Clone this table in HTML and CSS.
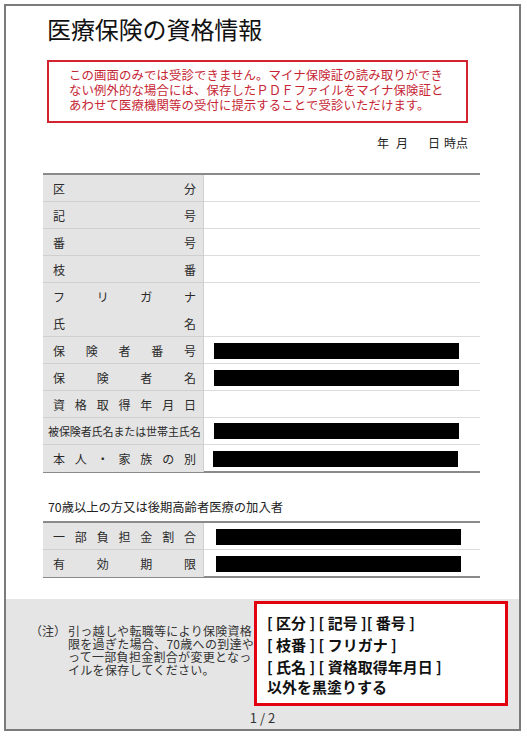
FILE: index.html
```html
<!DOCTYPE html>
<html lang="ja">
<head>
<meta charset="utf-8">
<title>医療保険の資格情報</title>
<link rel="stylesheet" href="styles.css">
</head>
<body>
<div class="page">
  <h1 class="title">医療保険の資格情報</h1>
  <div class="notice">
    この画面のみでは受診できません。マイナ保険証の読み取りができ<br>
    ない例外的な場合には、保存したＰＤＦファイルをマイナ保険証と<br>
    あわせて医療機関等の受付に提示することで受診いただけます。
  </div>
  <div class="date"><span>年</span><span class="d-m">月</span><span class="d-d">日</span><span class="d-t">時点</span></div>

  <div class="table">
    <div class="row"><div class="label"><div class="dist"><span>区</span><span>分</span></div></div><div class="value"></div></div>
    <div class="row"><div class="label"><div class="dist"><span>記</span><span>号</span></div></div><div class="value"></div></div>
    <div class="row"><div class="label"><div class="dist"><span>番</span><span>号</span></div></div><div class="value"></div></div>
    <div class="row"><div class="label"><div class="dist"><span>枝</span><span>番</span></div></div><div class="value"></div></div>
    <div class="row row-double"><div class="label label-double"><div class="dist"><span>フ</span><span>リ</span><span>ガ</span><span>ナ</span></div><div class="dist"><span>氏</span><span>名</span></div></div><div class="value"></div></div>
    <div class="row"><div class="label"><div class="dist"><span>保</span><span>険</span><span>者</span><span>番</span><span>号</span></div></div><div class="value"><div class="redact"></div></div></div>
    <div class="row"><div class="label"><div class="dist"><span>保</span><span>険</span><span>者</span><span>名</span></div></div><div class="value"><div class="redact"></div></div></div>
    <div class="row"><div class="label"><div class="dist"><span>資</span><span>格</span><span>取</span><span>得</span><span>年</span><span>月</span><span>日</span></div></div><div class="value"></div></div>
    <div class="row"><div class="label label-tight">被保険者氏名または世帯主氏名</div><div class="value"><div class="redact"></div></div></div>
    <div class="row"><div class="label"><div class="dist"><span>本</span><span>人</span><span>・</span><span>家</span><span>族</span><span>の</span><span>別</span></div></div><div class="value"><div class="redact redact-shift"></div></div></div>
  </div>

  <div class="caption">70歳以上の方又は後期高齢者医療の加入者</div>
  <div class="table table-2">
    <div class="row"><div class="label"><div class="dist"><span>一</span><span>部</span><span>負</span><span>担</span><span>金</span><span>割</span><span>合</span></div></div><div class="value"><div class="redact redact-2"></div></div></div>
    <div class="row"><div class="label"><div class="dist"><span>有</span><span>効</span><span>期</span><span>限</span></div></div><div class="value"><div class="redact redact-2"></div></div></div>
  </div>

  <div class="footer">
    <div class="note">
      <div class="note-mark">（注）</div>
      <div class="note-text">引っ越しや転職等により保険資格<br>限を過ぎた場合、70歳への到達や<br>って一部負担金割合が変更となっ<br>イルを保存してください。</div>
    </div>
    <div class="pager">1 / 2</div>
    <div class="callout">
      <div class="callout-line">[ 区分 ] [ 記号 ][ 番号 ]</div>
      <div class="callout-line">[ 枝番 ] [ フリガナ ]</div>
      <div class="callout-line">[ 氏名 ] [ 資格取得年月日 ]</div>
      <div class="callout-last">以外を黒塗りする</div>
    </div>
  </div>
</div>
</body>
</html>
```
FILE: styles.css
```css
* { box-sizing: border-box; }
html, body { margin: 0; padding: 0; background: #ffffff; }
body {
  font-family: "Noto Sans CJK JP", "Noto Sans", sans-serif;
  color: #222;
}
.page {
  margin: 4px 0 0 4px;
  width: 517px;
  height: 727px;
  border: 2px solid #7b7b7b;
  display: flex;
  flex-direction: column;
}
.title {
  margin: 7px 0 0 41px;
  font-size: 24px;
  line-height: 32px;
  font-weight: normal;
  color: #111;
  letter-spacing: -0.1px;
}
.notice {
  margin: 15px 0 0 41px;
  width: 421px;
  height: 63px;
  border: 2px solid #d3232f;
  padding: 6px 0 0 20px;
  font-size: 12.4px;
  line-height: 15px;
  letter-spacing: 0.1px;
  color: #c62634;
  white-space: nowrap;
}
.date {
  margin: 12px 51px 0 0;
  align-self: flex-end;
  font-size: 12px;
  line-height: 16px;
  color: #222;
  display: flex;
}
.d-m { margin-left: 7px; }
.d-d { margin-left: 20px; }
.d-t { margin-left: 4px; }
.table {
  margin: 22px 0 0 37px;
  width: 437px;
  border-top: 2px solid #8a8a8a;
  border-bottom: 2px solid #8a8a8a;
}
.row {
  display: grid;
  grid-template-columns: 161px 1fr;
  height: 27px;
  border-bottom: 1px solid #dcdcdc;
}
.row:last-child { border-bottom: none; height: 26px; }
.row-double { height: 54px; }
.label {
  background: #e4e4e4;
  border-right: 1px solid #d0d0d0;
  padding: 0 7px 0 10px;
  font-size: 12px;
  color: #2a2a2a;
  display: flex;
  flex-direction: column;
  justify-content: center;
}
.row + .row .label { box-shadow: 0 -1px 0 #cfcfcf; }
.label-double { justify-content: space-around; }
.dist {
  display: flex;
  justify-content: space-between;
  line-height: 27px;
}
.label-tight {
  padding: 0 0 0 5px;
  font-size: 11px;
  letter-spacing: -0.1px;
  white-space: nowrap;
}
.value {
  display: flex;
  align-items: center;
  padding-left: 10px;
}
.redact {
  width: 245px;
  height: 16px;
  background: #000;
}
.redact-shift { margin-left: -1px; }
.redact-2 { margin-left: 2px; }
.caption {
  margin: 26px 0 0 42px;
  font-size: 12.3px;
  line-height: 16px;
  color: #222;
}
.table-2 { margin-top: 6px; }
.table-2 .row { height: 27px; }
.table-2 .row:last-child { height: 26px; }
.footer {
  margin-top: 21px;
  flex: 1;
  background: #e5e5e5;
  position: relative;
  display: flex;
  flex-direction: column;
  overflow: hidden;
}
.note {
  display: flex;
  padding: 25px 0 0 24px;
  font-size: 12px;
  line-height: 13px;
  color: #333;
  white-space: nowrap;
}
.note-mark { width: 38px; }
.note-text {
  letter-spacing: 0.3px;
  width: 186px;
  overflow: hidden;
}
.pager {
  margin-top: auto;
  padding-bottom: 4px;
  text-align: center;
  font-size: 13px;
  line-height: 14px;
  color: #333;
}
.callout {
  position: absolute;
  left: 248px;
  top: 2px;
  width: 254px;
  height: 105px;
  background: #fff;
  border: 3px solid #e3000f;
  padding: 8px 0 0 10px;
  font-size: 15px;
  font-weight: bold;
  color: #111;
  white-space: nowrap;
}
.callout-line { line-height: 22px; }
.callout-last { line-height: 17px; }
```
